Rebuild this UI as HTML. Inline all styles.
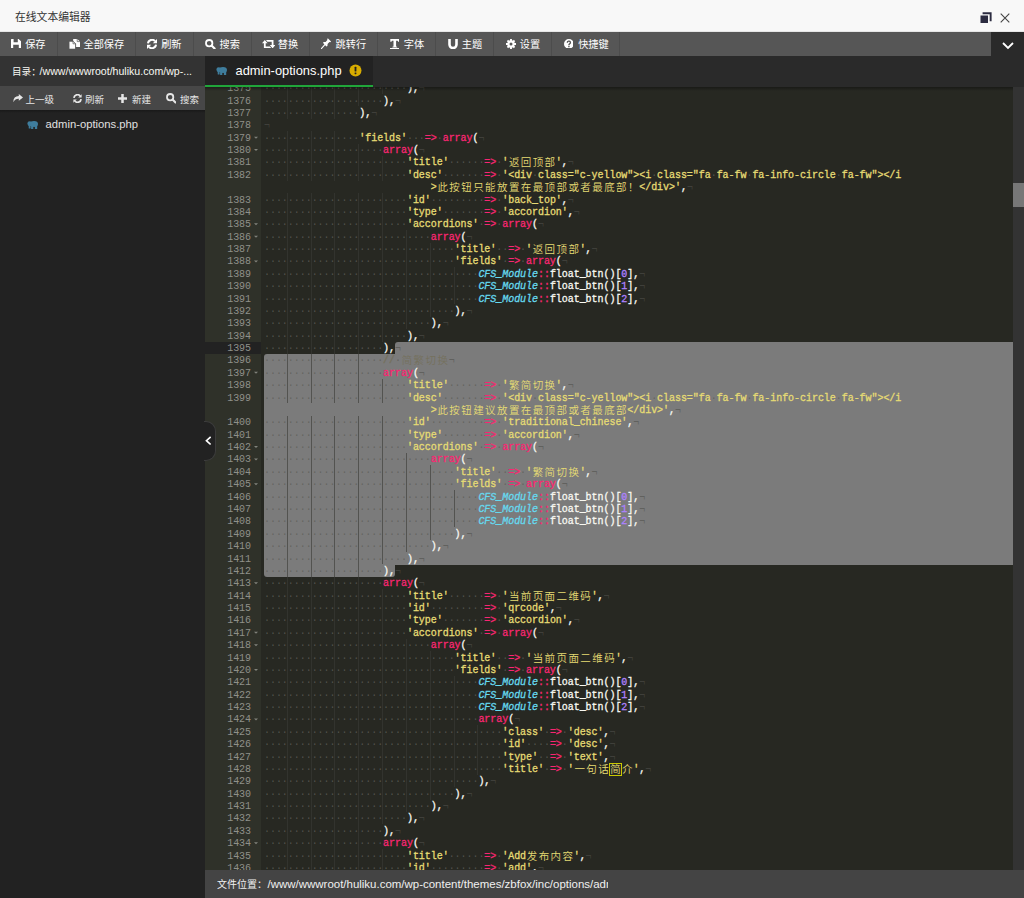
<!DOCTYPE html>
<html lang="zh-CN"><head><meta charset="utf-8"><title>在线文本编辑器</title>
<style>
*{box-sizing:border-box;margin:0;padding:0}
html,body{width:1024px;height:898px;overflow:hidden;background:#272822}
body{position:relative;font-family:"Liberation Sans","Noto Sans CJK SC",sans-serif;font-size:10px;color:#fff}
.abs{position:absolute}
.l{font-size:10.4px}
/* title bar */
#title{left:0;top:0;width:1024px;height:32px;background:#f8f8f8;border-bottom:1px solid #e6e6e6;color:#333}
#title .t{position:absolute;left:15px;top:1px;line-height:32px;font-size:10.8px;color:#333}
/* toolbar */
#tb{left:0;top:32px;width:1024px;height:24px;background:#565656}
#tb .b{position:absolute;top:0;height:24px;border-right:1px solid #4c4c4c;line-height:24px;color:#fff;font-size:10px;white-space:nowrap}
#tb .b span{position:absolute;top:1px;font-size:10.2px}
#tb .b svg{position:absolute}
#tbr{left:991px;top:32px;width:33px;height:24px;background:#2a2a2a}
/* left */
#dir{left:0;top:56px;width:205px;height:30px;background:#333;line-height:30px;white-space:nowrap}
#dir span.t{position:absolute;left:12px;top:-0.5px;font-size:9.6px}
#dir .l{font-size:10.6px;margin-left:-1.2px}
#sub{left:0;top:86px;width:205px;height:24px;background:#474747;line-height:24px;color:#e6e6e6;white-space:nowrap}
#sub span{position:absolute;top:2px;font-size:9.5px}
#sub svg{position:absolute}
#files{left:0;top:110px;width:205px;height:788px;background:#222}
#files .f{position:absolute;left:45.5px;top:6.5px;font-size:11.25px;line-height:14px;color:#e0e0e0;white-space:nowrap}
#handle{left:204px;top:421px;width:12px;height:40px;background:#222;border:1px solid #3c3c3c;border-left:none;border-radius:0 10px 10px 0}
/* tabs */
#tabs{left:205px;top:56px;width:819px;height:31px;background:#2a2a2a}
#tab{left:0;top:0;width:168.3px;height:31px;background:#222;border-bottom:2px solid #20a53a}
#tab .n{position:absolute;left:30.5px;top:0;line-height:29px;font-size:12.9px;color:#fff;white-space:nowrap}
/* editor */
#ed{left:205px;top:87px;width:819px;height:783px;background:#272822;overflow:hidden}
#edin{position:absolute;left:-205px;top:-87px;width:1024px;height:898px}
.gutter{position:absolute;left:205px;top:0;width:56px;height:898px;color:#8F908A}
#gbg{left:205px;top:0;width:56px;height:898px;background:#2F3129}
.gl{position:absolute;left:0;top:0;width:56px;padding-right:10px;text-align:right;height:12.377px;line-height:12.377px;font:10px/12.377px "Liberation Mono",monospace;letter-spacing:-.045px}

.fw{position:absolute;left:49px;top:4px;width:0;height:0;border-left:2.4px solid transparent;border-right:2.4px solid transparent;border-top:2.8px solid #82837c}
.text{position:absolute;left:264px;top:0;width:760px;height:898px}
.ln{position:absolute;left:0;top:0;height:12.377px;white-space:pre;font:10px/12.377px "Liberation Mono","Noto Sans CJK SC",monospace;letter-spacing:-.045px;color:#F8F8F2}
.ln b{position:absolute;top:0;font-weight:normal;-webkit-text-stroke:.3px}
.ln b.j{width:11.9px;text-align:center;font-size:10.5px;letter-spacing:0;font-weight:350;-webkit-text-stroke:0}
.s{color:#E6DB74}.k{color:#F92672}.c{color:#66D9EF;font-style:italic}.n{color:#AE81FF}.com{color:#75715E}.inv{color:rgba(94,94,89,.8);-webkit-text-stroke:0!important}.eol{color:rgba(80,80,75,.6);-webkit-text-stroke:0!important}.t{color:#F8F8F2}
.ig{position:absolute;width:1px;background:rgba(58,58,54,.62)}
.sel{position:absolute;background:#7b7b7b}
#sb{left:1013px;top:87px;width:11px;height:783px;background:#333}
#sbt{left:1013px;top:183px;width:11px;height:24px;background:#777}
#shadow{left:205px;top:87px;width:819px;height:4px;background:linear-gradient(rgba(0,0,0,.35),rgba(0,0,0,0))}
/* footer */
#foot{left:205px;top:870px;width:819px;height:28px;background:#444}
#foot .t{position:absolute;left:12px;top:0;width:391px;height:28px;overflow:hidden;line-height:28px;white-space:nowrap;color:#f0f0f0}
#foot .l{font-size:11.48px;margin-left:.5px}
</style></head><body>
<div id="title" class="abs"><span class="t">在线文本编辑器</span>
<svg class="abs" style="left:980px;top:11.5px" width="12" height="12" viewBox="0 0 12 12"><path d="M2.6 0.3h9v9h-1.9v-7.1h-7.1z" fill="#2b2b40"/><rect x="0.5" y="3.5" width="7.5" height="7.5" fill="#2b2b40"/></svg>
<svg class="abs" style="left:1000px;top:12.5px" width="10" height="10" viewBox="0 0 10 10"><path d="M0.7 0.7L9.3 9.3M9.3 0.7L0.7 9.3" stroke="#444" stroke-width="1.1" fill="none"/></svg>
</div>
<div id="tb" class="abs">
<div class="b" style="left:0.0px;width:57.7px"><svg style="left:10.8px;top:6.7px" width="10" height="9.5" viewBox="0 0 10 9.5"><path d="M0 .6Q0 0 .6 0H7.6L10 2.2V8.9Q10 9.5 9.4 9.5H0.6Q0 9.5 0 8.9Z M2.6 0V3.2H6.8V0Z M2.2 9.5V5.8H7.8V9.5Z" fill="#fff" fill-rule="evenodd"/></svg><span style="left:25.2px">保存</span></div>
<div class="b" style="left:57.2px;width:78.7px"><svg style="left:11.7px;top:6.7px" width="11" height="10.2" viewBox="0 0 11 10.2"><path d="M4.2 0H8.2L11 2.6V8H4.2Z" fill="#fff"/><path d="M0 2.2H4L6.6 4.8V10.2H0Z" fill="#fff" stroke="#565656" stroke-width=".9"/><path d="M4 2.2V4.8H6.6" fill="none" stroke="#565656" stroke-width=".7"/><path d="M8.2 0V2.6H11" fill="none" stroke="#565656" stroke-width=".7"/></svg><span style="left:26.3px">全部保存</span></div>
<div class="b" style="left:135.4px;width:58.5px"><svg style="left:12.0px;top:6.7px" width="10" height="10" viewBox="0 0 10 10"><path d="M1 4.4A4 4 0 0 1 8 2.2" fill="none" stroke="#fff" stroke-width="2"/><path d="M9 5.6A4 4 0 0 1 2 7.8" fill="none" stroke="#fff" stroke-width="2"/><path d="M10 0V4.2H5.8Z" fill="#fff"/><path d="M0 10V5.8H4.2Z" fill="#fff"/></svg><span style="left:25.8px">刷新</span></div>
<div class="b" style="left:193.4px;width:58.6px"><svg style="left:12.0px;top:6.5px" width="10.5" height="10.5" viewBox="0 0 10.5 10.5"><circle cx="4.2" cy="4.2" r="3.2" fill="none" stroke="#fff" stroke-width="1.8"/><path d="M6.6 6.6L9.6 9.6" stroke="#fff" stroke-width="2.1" stroke-linecap="round"/></svg><span style="left:26.2px">搜索</span></div>
<div class="b" style="left:251.5px;width:58.2px"><svg style="left:10.4px;top:7.8px" width="13.4" height="8.4" viewBox="0 0 13.4 8.4"><path d="M0 3.3L2.8 0L5.6 3.3H3.7V6.6H8L9.4 8.4H1.9V3.3Z" fill="#fff"/><path d="M13.4 5.1L10.6 8.4L7.8 5.1H9.7V1.8H5.4L4 0H11.5V5.1Z" fill="#fff"/></svg><span style="left:26.3px">替换</span></div>
<div class="b" style="left:309.2px;width:69.2px"><svg style="left:11.8px;top:6.2px" width="10.5" height="11" viewBox="0 0 10.5 11"><path d="M6.8 0.3L10.2 3.7L9.2 4.3L8.4 4.1L6.6 5.9L6.4 8L5.4 8.4L2.1 5.1L2.5 4.1L4.6 3.9L6.4 2.1L6.2 1.3Z" fill="#fff"/><path d="M3.9 6.6L0.3 10.7" stroke="#fff" stroke-width="1.1" stroke-linecap="round"/></svg><span style="left:26.4px">跳转行</span></div>
<div class="b" style="left:377.9px;width:58.2px"><svg style="left:11.9px;top:6.5px" width="9.6" height="10.6" viewBox="0 0 9.6 10.6"><path d="M0.3 0H9.3V2.8H8.1L7.7 1.7H6.1V7.4L7.2 7.7V8.4H2.4V7.7L3.5 7.4V1.7H1.9L1.5 2.8H0.3Z" fill="#fff"/><rect x="0" y="9" width="9.6" height="1.6" fill="#fff"/></svg><span style="left:25.9px">字体</span></div>
<div class="b" style="left:435.6px;width:58.6px"><svg style="left:12.0px;top:6.6px" width="10" height="10.4" viewBox="0 0 10 10.4"><path d="M1.5 0V5.6A3.5 3.5 0 0 0 8.5 5.6V0" fill="none" stroke="#fff" stroke-width="2.6"/></svg><span style="left:26.2px">主题</span></div>
<div class="b" style="left:493.7px;width:58.4px"><svg style="left:12.0px;top:6.7px" width="10" height="10" viewBox="0 0 10 10"><circle cx="5" cy="5" r="2.6" fill="none" stroke="#fff" stroke-width="2.2"/><g stroke="#fff" stroke-width="1.9"><path d="M5 0V2M5 8V10M0 5H2M8 5H10M1.46 1.46L2.9 2.9M7.1 7.1L8.54 8.54M1.46 8.54L2.9 7.1M7.1 2.9L8.54 1.46"/></g></svg><span style="left:26.1px">设置</span></div>
<div class="b" style="left:551.6px;width:68.9px"><svg style="left:12.0px;top:6.7px" width="9.8" height="9.8" viewBox="0 0 9.4 9.4"><circle cx="4.7" cy="4.7" r="4.7" fill="#fff"/><path d="M3.2 3.6A1.5 1.4 0 1 1 5.4 4.7Q4.7 5.1 4.7 5.9" fill="none" stroke="#565656" stroke-width="1.3"/><rect x="4.05" y="6.6" width="1.3" height="1.3" fill="#565656"/></svg><span style="left:26.6px">快捷键</span></div>
</div>
<div id="tbr" class="abs"><svg class="abs" style="left:11px;top:9.5px" width="12" height="8" viewBox="0 0 12 8"><path d="M1 1L6 6L11 1" stroke="#fff" stroke-width="1.8" fill="none"/></svg></div>
<div id="dir" class="abs"><span class="t">目录：<span class="l">/www/wwwroot/huliku.com/wp-...</span></span></div>
<div id="sub" class="abs">
<svg style="left:13px;top:8px" width="10" height="8.4" viewBox="0 0 10 8.4"><path d="M5.8 0L10 3.4L5.8 6.8V4.7Q2.2 4.5 0.4 8.2Q0 2.6 5.8 2.1Z" fill="#e6e6e6"/></svg><span style="left:25.5px">上一级</span>
<svg style="left:72.5px;top:7.5px" width="9" height="9" viewBox="0 0 10 10"><path d="M1 4.4A4 4 0 0 1 8 2.2" fill="none" stroke="#e6e6e6" stroke-width="2"/><path d="M9 5.6A4 4 0 0 1 2 7.8" fill="none" stroke="#e6e6e6" stroke-width="2"/><path d="M9.6 0.2V4H5.8Z" fill="#e6e6e6"/><path d="M0.4 9.8V6H4.2Z" fill="#e6e6e6"/></svg><span style="left:85.0px">刷新</span>
<svg style="left:118px;top:7.6px" width="9" height="9" viewBox="0 0 9 9"><path d="M4.5 0V9M0 4.5H9" stroke="#e6e6e6" stroke-width="2.5"/></svg><span style="left:132.0px">新建</span>
<svg style="left:166px;top:7.3px" width="10.4" height="10.4" viewBox="0 0 10.5 10.5"><circle cx="4.2" cy="4.2" r="3.2" fill="none" stroke="#e6e6e6" stroke-width="1.8"/><path d="M6.6 6.6L9.6 9.6" stroke="#e6e6e6" stroke-width="2.1" stroke-linecap="round"/></svg><span style="left:180.0px">搜索</span>
</div>
<div id="files" class="abs"><div class="abs" style="left:0;top:0;width:205px;height:3px;background:linear-gradient(rgba(0,0,0,.28),rgba(0,0,0,0))"></div>
<svg class="abs" style="left:27.1px;top:10.599999999999994px" width="11.4" height="8.4" viewBox="0 0 11.4 8.4"><g fill="#3f7d9d"><circle cx="2.9" cy="2.7" r="2.5"/><ellipse cx="7" cy="3.1" rx="4" ry="3"/><rect x="1.7" y="3.5" width="1.9" height="4" rx=".6"/><rect x="4.1" y="4" width="2.2" height="4.4" rx=".5"/><rect x="7.9" y="4" width="2.3" height="4.4" rx=".5"/></g></svg>
<span class="f">admin-options.php</span></div>
<div id="tabs" class="abs"><div id="tab" class="abs">
<svg class="abs" style="left:11px;top:10.700000000000003px" width="11.4" height="8.4" viewBox="0 0 11.4 8.4"><g fill="#3f7d9d"><circle cx="2.9" cy="2.7" r="2.5"/><ellipse cx="7" cy="3.1" rx="4" ry="3"/><rect x="1.7" y="3.5" width="1.9" height="4" rx=".6"/><rect x="4.1" y="4" width="2.2" height="4.4" rx=".5"/><rect x="7.9" y="4" width="2.3" height="4.4" rx=".5"/></g></svg>
<span class="n">admin-options.php</span>
<svg class="abs" style="left:144.3px;top:8.4px" width="13" height="13" viewBox="0 0 13 13"><circle cx="6.5" cy="6.5" r="6" fill="#d8ac00"/><rect x="5.6" y="2.8" width="1.8" height="4.6" rx=".5" fill="#222"/><rect x="5.6" y="8.4" width="1.8" height="1.8" rx=".4" fill="#222"/></svg>
</div></div>
<div id="ed" class="abs"><div id="edin">
<div id="gbg" class="abs"></div>
<div class="sel" style="left:395.03px;top:341.60px;width:617.97px;height:12.68px;border-radius:3px 0 0 0"></div>
<div class="sel" style="left:264.00px;top:353.97px;width:749.00px;height:210.71px;border-radius:3px 0 0 0"></div>
<div class="sel" style="left:264.00px;top:564.38px;width:131.03px;height:12.38px;border-radius:0 0 3px 3px"></div>
<div class="abs" style="left:205px;top:341.60px;width:56px;height:12.38px;background:#222"></div>
<div class="abs" style="left:609.15px;top:763.21px;width:12.51px;height:12.38px;border:1px solid #c8c800;z-index:3"></div>
<div class="gutter"><div class="gl" style="transform:translateY(83.18px)">1375</div><div class="gl" style="transform:translateY(95.56px)">1376</div><div class="gl" style="transform:translateY(107.93px)">1377</div><div class="gl" style="transform:translateY(120.31px)">1378</div><div class="gl" style="transform:translateY(132.69px)">1379<i class="fw"></i></div><div class="gl" style="transform:translateY(145.06px)">1380<i class="fw"></i></div><div class="gl" style="transform:translateY(157.44px)">1381</div><div class="gl" style="transform:translateY(169.82px)">1382</div><div class="gl" style="transform:translateY(194.57px)">1383</div><div class="gl" style="transform:translateY(206.95px)">1384</div><div class="gl" style="transform:translateY(219.33px)">1385<i class="fw"></i></div><div class="gl" style="transform:translateY(231.7px)">1386<i class="fw"></i></div><div class="gl" style="transform:translateY(244.08px)">1387</div><div class="gl" style="transform:translateY(256.46px)">1388<i class="fw"></i></div><div class="gl" style="transform:translateY(268.84px)">1389</div><div class="gl" style="transform:translateY(281.21px)">1390</div><div class="gl" style="transform:translateY(293.59px)">1391</div><div class="gl" style="transform:translateY(305.97px)">1392</div><div class="gl" style="transform:translateY(318.34px)">1393</div><div class="gl" style="transform:translateY(330.72px)">1394</div><div class="gl act" style="transform:translateY(343.1px)">1395</div><div class="gl" style="transform:translateY(355.47px)">1396</div><div class="gl" style="transform:translateY(367.85px)">1397<i class="fw"></i></div><div class="gl" style="transform:translateY(380.23px)">1398</div><div class="gl" style="transform:translateY(392.61px)">1399</div><div class="gl" style="transform:translateY(417.36px)">1400</div><div class="gl" style="transform:translateY(429.74px)">1401</div><div class="gl" style="transform:translateY(442.11px)">1402<i class="fw"></i></div><div class="gl" style="transform:translateY(454.49px)">1403<i class="fw"></i></div><div class="gl" style="transform:translateY(466.87px)">1404</div><div class="gl" style="transform:translateY(479.24px)">1405<i class="fw"></i></div><div class="gl" style="transform:translateY(491.62px)">1406</div><div class="gl" style="transform:translateY(504px)">1407</div><div class="gl" style="transform:translateY(516.38px)">1408</div><div class="gl" style="transform:translateY(528.75px)">1409</div><div class="gl" style="transform:translateY(541.13px)">1410</div><div class="gl" style="transform:translateY(553.51px)">1411</div><div class="gl" style="transform:translateY(565.88px)">1412</div><div class="gl" style="transform:translateY(578.26px)">1413<i class="fw"></i></div><div class="gl" style="transform:translateY(590.64px)">1414</div><div class="gl" style="transform:translateY(603.01px)">1415</div><div class="gl" style="transform:translateY(615.39px)">1416</div><div class="gl" style="transform:translateY(627.77px)">1417<i class="fw"></i></div><div class="gl" style="transform:translateY(640.14px)">1418<i class="fw"></i></div><div class="gl" style="transform:translateY(652.52px)">1419</div><div class="gl" style="transform:translateY(664.9px)">1420<i class="fw"></i></div><div class="gl" style="transform:translateY(677.28px)">1421</div><div class="gl" style="transform:translateY(689.65px)">1422</div><div class="gl" style="transform:translateY(702.03px)">1423</div><div class="gl" style="transform:translateY(714.41px)">1424<i class="fw"></i></div><div class="gl" style="transform:translateY(726.78px)">1425</div><div class="gl" style="transform:translateY(739.16px)">1426</div><div class="gl" style="transform:translateY(751.54px)">1427</div><div class="gl" style="transform:translateY(763.91px)">1428</div><div class="gl" style="transform:translateY(776.29px)">1429</div><div class="gl" style="transform:translateY(788.67px)">1430</div><div class="gl" style="transform:translateY(801.05px)">1431</div><div class="gl" style="transform:translateY(813.42px)">1432</div><div class="gl" style="transform:translateY(825.8px)">1433</div><div class="gl" style="transform:translateY(838.18px)">1434<i class="fw"></i></div><div class="gl" style="transform:translateY(850.55px)">1435</div><div class="gl" style="transform:translateY(862.93px)">1436</div></div>
<div class="text"><i class="ig" style="left:22.82px;top:81.68px;height:37.13px"></i><i class="ig" style="left:22.82px;top:131.19px;height:49.51px"></i><i class="ig" style="left:22.82px;top:193.07px;height:210.41px"></i><i class="ig" style="left:22.82px;top:415.86px;height:457.95px"></i><i class="ig" style="left:46.65px;top:81.68px;height:37.13px"></i><i class="ig" style="left:46.65px;top:131.19px;height:49.51px"></i><i class="ig" style="left:46.65px;top:193.07px;height:210.41px"></i><i class="ig" style="left:46.65px;top:415.86px;height:457.95px"></i><i class="ig" style="left:70.47px;top:81.68px;height:37.13px"></i><i class="ig" style="left:70.47px;top:131.19px;height:49.51px"></i><i class="ig" style="left:70.47px;top:193.07px;height:210.41px"></i><i class="ig" style="left:70.47px;top:415.86px;height:457.95px"></i><i class="ig" style="left:94.3px;top:81.68px;height:24.75px"></i><i class="ig" style="left:94.3px;top:143.56px;height:37.13px"></i><i class="ig" style="left:94.3px;top:193.07px;height:210.41px"></i><i class="ig" style="left:94.3px;top:415.86px;height:457.95px"></i><i class="ig" style="left:118.12px;top:81.68px;height:12.38px"></i><i class="ig" style="left:118.12px;top:155.94px;height:24.75px"></i><i class="ig" style="left:118.12px;top:193.07px;height:148.52px"></i><i class="ig" style="left:118.12px;top:378.73px;height:24.75px"></i><i class="ig" style="left:118.12px;top:415.86px;height:148.52px"></i><i class="ig" style="left:118.12px;top:589.14px;height:235.16px"></i><i class="ig" style="left:118.12px;top:849.05px;height:24.75px"></i><i class="ig" style="left:141.94px;top:230.2px;height:99.02px"></i><i class="ig" style="left:141.94px;top:452.99px;height:99.02px"></i><i class="ig" style="left:141.94px;top:638.64px;height:173.28px"></i><i class="ig" style="left:165.77px;top:242.58px;height:74.26px"></i><i class="ig" style="left:165.77px;top:465.37px;height:74.26px"></i><i class="ig" style="left:165.77px;top:651.02px;height:148.52px"></i><i class="ig" style="left:189.59px;top:267.34px;height:37.13px"></i><i class="ig" style="left:189.59px;top:490.12px;height:37.13px"></i><i class="ig" style="left:189.59px;top:675.78px;height:111.39px"></i><i class="ig" style="left:213.42px;top:725.28px;height:49.51px"></i>
<div class="ln" style="transform:translateY(83.18px)"><b class="inv" style="left:0px">····</b><b class="inv" style="left:23.82px">····</b><b class="inv" style="left:47.65px">····</b><b class="inv" style="left:71.47px">····</b><b class="inv" style="left:95.3px">····</b><b class="inv" style="left:119.12px">····</b><b class="t" style="left:142.94px">),</b><b class="eol" style="left:154.86px">¬</b></div>
<div class="ln" style="transform:translateY(95.56px)"><b class="inv" style="left:0px">····</b><b class="inv" style="left:23.82px">····</b><b class="inv" style="left:47.65px">····</b><b class="inv" style="left:71.47px">····</b><b class="inv" style="left:95.3px">····</b><b class="t" style="left:119.12px">),</b><b class="eol" style="left:131.03px">¬</b></div>
<div class="ln" style="transform:translateY(107.93px)"><b class="inv" style="left:0px">····</b><b class="inv" style="left:23.82px">····</b><b class="inv" style="left:47.65px">····</b><b class="inv" style="left:71.47px">····</b><b class="t" style="left:95.3px">),</b><b class="eol" style="left:107.21px">¬</b></div>
<div class="ln" style="transform:translateY(120.31px)"><b class="eol" style="left:0px">¬</b></div>
<div class="ln" style="transform:translateY(132.69px)"><b class="inv" style="left:0px">····</b><b class="inv" style="left:23.82px">····</b><b class="inv" style="left:47.65px">····</b><b class="inv" style="left:71.47px">····</b><b class="s" style="left:95.3px">'fields'</b><b class="inv" style="left:142.94px">···</b><b class="k" style="left:160.81px">=&gt;</b><b class="inv" style="left:172.72px">·</b><b class="k" style="left:178.68px">array</b><b class="t" style="left:208.46px">(</b><b class="eol" style="left:214.42px">¬</b></div>
<div class="ln" style="transform:translateY(145.06px)"><b class="inv" style="left:0px">····</b><b class="inv" style="left:23.82px">····</b><b class="inv" style="left:47.65px">····</b><b class="inv" style="left:71.47px">····</b><b class="inv" style="left:95.3px">····</b><b class="k" style="left:119.12px">array</b><b class="t" style="left:148.9px">(</b><b class="eol" style="left:154.86px">¬</b></div>
<div class="ln" style="transform:translateY(157.44px)"><b class="inv" style="left:0px">····</b><b class="inv" style="left:23.82px">····</b><b class="inv" style="left:47.65px">····</b><b class="inv" style="left:71.47px">····</b><b class="inv" style="left:95.3px">····</b><b class="inv" style="left:119.12px">····</b><b class="s" style="left:142.94px">'title'</b><b class="inv" style="left:184.64px">·</b><b class="inv" style="left:190.59px">····</b><b class="inv" style="left:214.42px">·</b><b class="k" style="left:220.37px">=&gt;</b><b class="inv" style="left:232.28px">·</b><b class="s" style="left:238.24px">'</b><b class="j s" style="left:244.2px">返</b><b class="j s" style="left:256.11px">回</b><b class="j s" style="left:268.02px">顶</b><b class="j s" style="left:279.93px">部</b><b class="s" style="left:291.84px">'</b><b class="t" style="left:297.8px">,</b><b class="eol" style="left:303.76px">¬</b></div>
<div class="ln" style="transform:translateY(169.82px)"><b class="inv" style="left:0px">····</b><b class="inv" style="left:23.82px">····</b><b class="inv" style="left:47.65px">····</b><b class="inv" style="left:71.47px">····</b><b class="inv" style="left:95.3px">····</b><b class="inv" style="left:119.12px">····</b><b class="s" style="left:142.94px">'desc'</b><b class="inv" style="left:178.68px">··</b><b class="inv" style="left:190.59px">····</b><b class="inv" style="left:214.42px">·</b><b class="k" style="left:220.37px">=&gt;</b><b class="inv" style="left:232.28px">·</b><b class="s" style="left:238.24px">'&lt;div</b><b class="inv" style="left:268.02px">·</b><b class="s" style="left:273.98px">class="c-yello</b><b class="s" style="left:357.36px">w"&gt;&lt;i</b><b class="inv" style="left:387.14px">·</b><b class="s" style="left:393.1px">class="fa</b><b class="inv" style="left:446.7px">·</b><b class="s" style="left:452.66px">fa-fw</b><b class="inv" style="left:482.44px">·</b><b class="s" style="left:488.39px">fa-info-circle</b><b class="inv" style="left:571.78px">·</b><b class="s" style="left:577.73px">fa-fw"&gt;&lt;/i</b></div>
<div class="ln" style="transform:translateY(182.2px)"><b class="s" style="left:166.77px">&gt;</b><b class="j s" style="left:172.72px">此</b><b class="j s" style="left:184.64px">按</b><b class="j s" style="left:196.55px">钮</b><b class="j s" style="left:208.46px">只</b><b class="j s" style="left:220.37px">能</b><b class="j s" style="left:232.28px">放</b><b class="j s" style="left:244.2px">置</b><b class="j s" style="left:256.11px">在</b><b class="j s" style="left:268.02px">最</b><b class="j s" style="left:279.93px">顶</b><b class="j s" style="left:291.84px">部</b><b class="j s" style="left:303.76px">或</b><b class="j s" style="left:315.67px">者</b><b class="j s" style="left:327.58px">最</b><b class="j s" style="left:339.49px">底</b><b class="j s" style="left:351.4px">部</b><b class="j s" style="left:363.32px">！</b><b class="s" style="left:375.23px">&lt;/div&gt;'</b><b class="t" style="left:416.92px">,</b><b class="eol" style="left:422.88px">¬</b></div>
<div class="ln" style="transform:translateY(194.57px)"><b class="inv" style="left:0px">····</b><b class="inv" style="left:23.82px">····</b><b class="inv" style="left:47.65px">····</b><b class="inv" style="left:71.47px">····</b><b class="inv" style="left:95.3px">····</b><b class="inv" style="left:119.12px">····</b><b class="s" style="left:142.94px">'id'</b><b class="inv" style="left:166.77px">····</b><b class="inv" style="left:190.59px">····</b><b class="inv" style="left:214.42px">·</b><b class="k" style="left:220.37px">=&gt;</b><b class="inv" style="left:232.28px">·</b><b class="s" style="left:238.24px">'back_top'</b><b class="t" style="left:297.8px">,</b><b class="eol" style="left:303.76px">¬</b></div>
<div class="ln" style="transform:translateY(206.95px)"><b class="inv" style="left:0px">····</b><b class="inv" style="left:23.82px">····</b><b class="inv" style="left:47.65px">····</b><b class="inv" style="left:71.47px">····</b><b class="inv" style="left:95.3px">····</b><b class="inv" style="left:119.12px">····</b><b class="s" style="left:142.94px">'type'</b><b class="inv" style="left:178.68px">··</b><b class="inv" style="left:190.59px">····</b><b class="inv" style="left:214.42px">·</b><b class="k" style="left:220.37px">=&gt;</b><b class="inv" style="left:232.28px">·</b><b class="s" style="left:238.24px">'accordion'</b><b class="t" style="left:303.76px">,</b><b class="eol" style="left:309.71px">¬</b></div>
<div class="ln" style="transform:translateY(219.33px)"><b class="inv" style="left:0px">····</b><b class="inv" style="left:23.82px">····</b><b class="inv" style="left:47.65px">····</b><b class="inv" style="left:71.47px">····</b><b class="inv" style="left:95.3px">····</b><b class="inv" style="left:119.12px">····</b><b class="s" style="left:142.94px">'accordions'</b><b class="inv" style="left:214.42px">·</b><b class="k" style="left:220.37px">=&gt;</b><b class="inv" style="left:232.28px">·</b><b class="k" style="left:238.24px">array</b><b class="t" style="left:268.02px">(</b><b class="eol" style="left:273.98px">¬</b></div>
<div class="ln" style="transform:translateY(231.7px)"><b class="inv" style="left:0px">····</b><b class="inv" style="left:23.82px">····</b><b class="inv" style="left:47.65px">····</b><b class="inv" style="left:71.47px">····</b><b class="inv" style="left:95.3px">····</b><b class="inv" style="left:119.12px">····</b><b class="inv" style="left:142.94px">····</b><b class="k" style="left:166.77px">array</b><b class="t" style="left:196.55px">(</b><b class="eol" style="left:202.5px">¬</b></div>
<div class="ln" style="transform:translateY(244.08px)"><b class="inv" style="left:0px">····</b><b class="inv" style="left:23.82px">····</b><b class="inv" style="left:47.65px">····</b><b class="inv" style="left:71.47px">····</b><b class="inv" style="left:95.3px">····</b><b class="inv" style="left:119.12px">····</b><b class="inv" style="left:142.94px">····</b><b class="inv" style="left:166.77px">····</b><b class="s" style="left:190.59px">'title'</b><b class="inv" style="left:232.28px">·</b><b class="inv" style="left:238.24px">·</b><b class="k" style="left:244.2px">=&gt;</b><b class="inv" style="left:256.11px">·</b><b class="s" style="left:262.06px">'</b><b class="j s" style="left:268.02px">返</b><b class="j s" style="left:279.93px">回</b><b class="j s" style="left:291.84px">顶</b><b class="j s" style="left:303.76px">部</b><b class="s" style="left:315.67px">'</b><b class="t" style="left:321.62px">,</b><b class="eol" style="left:327.58px">¬</b></div>
<div class="ln" style="transform:translateY(256.46px)"><b class="inv" style="left:0px">····</b><b class="inv" style="left:23.82px">····</b><b class="inv" style="left:47.65px">····</b><b class="inv" style="left:71.47px">····</b><b class="inv" style="left:95.3px">····</b><b class="inv" style="left:119.12px">····</b><b class="inv" style="left:142.94px">····</b><b class="inv" style="left:166.77px">····</b><b class="s" style="left:190.59px">'fields'</b><b class="inv" style="left:238.24px">·</b><b class="k" style="left:244.2px">=&gt;</b><b class="inv" style="left:256.11px">·</b><b class="k" style="left:262.06px">array</b><b class="t" style="left:291.84px">(</b><b class="eol" style="left:297.8px">¬</b></div>
<div class="ln" style="transform:translateY(268.84px)"><b class="inv" style="left:0px">····</b><b class="inv" style="left:23.82px">····</b><b class="inv" style="left:47.65px">····</b><b class="inv" style="left:71.47px">····</b><b class="inv" style="left:95.3px">····</b><b class="inv" style="left:119.12px">····</b><b class="inv" style="left:142.94px">····</b><b class="inv" style="left:166.77px">····</b><b class="inv" style="left:190.59px">····</b><b class="c" style="left:214.42px">CFS_Module</b><b class="k" style="left:273.98px">::</b><b class="t" style="left:285.89px">float_btn()[</b><b class="n" style="left:357.36px">0</b><b class="t" style="left:363.32px">],</b><b class="eol" style="left:375.23px">¬</b></div>
<div class="ln" style="transform:translateY(281.21px)"><b class="inv" style="left:0px">····</b><b class="inv" style="left:23.82px">····</b><b class="inv" style="left:47.65px">····</b><b class="inv" style="left:71.47px">····</b><b class="inv" style="left:95.3px">····</b><b class="inv" style="left:119.12px">····</b><b class="inv" style="left:142.94px">····</b><b class="inv" style="left:166.77px">····</b><b class="inv" style="left:190.59px">····</b><b class="c" style="left:214.42px">CFS_Module</b><b class="k" style="left:273.98px">::</b><b class="t" style="left:285.89px">float_btn()[</b><b class="n" style="left:357.36px">1</b><b class="t" style="left:363.32px">],</b><b class="eol" style="left:375.23px">¬</b></div>
<div class="ln" style="transform:translateY(293.59px)"><b class="inv" style="left:0px">····</b><b class="inv" style="left:23.82px">····</b><b class="inv" style="left:47.65px">····</b><b class="inv" style="left:71.47px">····</b><b class="inv" style="left:95.3px">····</b><b class="inv" style="left:119.12px">····</b><b class="inv" style="left:142.94px">····</b><b class="inv" style="left:166.77px">····</b><b class="inv" style="left:190.59px">····</b><b class="c" style="left:214.42px">CFS_Module</b><b class="k" style="left:273.98px">::</b><b class="t" style="left:285.89px">float_btn()[</b><b class="n" style="left:357.36px">2</b><b class="t" style="left:363.32px">],</b><b class="eol" style="left:375.23px">¬</b></div>
<div class="ln" style="transform:translateY(305.97px)"><b class="inv" style="left:0px">····</b><b class="inv" style="left:23.82px">····</b><b class="inv" style="left:47.65px">····</b><b class="inv" style="left:71.47px">····</b><b class="inv" style="left:95.3px">····</b><b class="inv" style="left:119.12px">····</b><b class="inv" style="left:142.94px">····</b><b class="inv" style="left:166.77px">····</b><b class="t" style="left:190.59px">),</b><b class="eol" style="left:202.5px">¬</b></div>
<div class="ln" style="transform:translateY(318.34px)"><b class="inv" style="left:0px">····</b><b class="inv" style="left:23.82px">····</b><b class="inv" style="left:47.65px">····</b><b class="inv" style="left:71.47px">····</b><b class="inv" style="left:95.3px">····</b><b class="inv" style="left:119.12px">····</b><b class="inv" style="left:142.94px">····</b><b class="t" style="left:166.77px">),</b><b class="eol" style="left:178.68px">¬</b></div>
<div class="ln" style="transform:translateY(330.72px)"><b class="inv" style="left:0px">····</b><b class="inv" style="left:23.82px">····</b><b class="inv" style="left:47.65px">····</b><b class="inv" style="left:71.47px">····</b><b class="inv" style="left:95.3px">····</b><b class="inv" style="left:119.12px">····</b><b class="t" style="left:142.94px">),</b><b class="eol" style="left:154.86px">¬</b></div>
<div class="ln" style="transform:translateY(343.1px)"><b class="inv" style="left:0px">····</b><b class="inv" style="left:23.82px">····</b><b class="inv" style="left:47.65px">····</b><b class="inv" style="left:71.47px">····</b><b class="inv" style="left:95.3px">····</b><b class="t" style="left:119.12px">),</b><b class="eol" style="left:131.03px">¬</b></div>
<div class="ln" style="transform:translateY(355.47px)"><b class="inv" style="left:0px">····</b><b class="inv" style="left:23.82px">····</b><b class="inv" style="left:47.65px">····</b><b class="inv" style="left:71.47px">····</b><b class="inv" style="left:95.3px">····</b><b class="com" style="left:119.12px">//</b><b class="inv" style="left:131.03px">·</b><b class="j com" style="left:136.99px">简</b><b class="j com" style="left:148.9px">繁</b><b class="j com" style="left:160.81px">切</b><b class="j com" style="left:172.72px">换</b><b class="eol" style="left:184.64px">¬</b></div>
<div class="ln" style="transform:translateY(367.85px)"><b class="inv" style="left:0px">····</b><b class="inv" style="left:23.82px">····</b><b class="inv" style="left:47.65px">····</b><b class="inv" style="left:71.47px">····</b><b class="inv" style="left:95.3px">····</b><b class="k" style="left:119.12px">array</b><b class="t" style="left:148.9px">(</b><b class="eol" style="left:154.86px">¬</b></div>
<div class="ln" style="transform:translateY(380.23px)"><b class="inv" style="left:0px">····</b><b class="inv" style="left:23.82px">····</b><b class="inv" style="left:47.65px">····</b><b class="inv" style="left:71.47px">····</b><b class="inv" style="left:95.3px">····</b><b class="inv" style="left:119.12px">····</b><b class="s" style="left:142.94px">'title'</b><b class="inv" style="left:184.64px">·</b><b class="inv" style="left:190.59px">····</b><b class="inv" style="left:214.42px">·</b><b class="k" style="left:220.37px">=&gt;</b><b class="inv" style="left:232.28px">·</b><b class="s" style="left:238.24px">'</b><b class="j s" style="left:244.2px">繁</b><b class="j s" style="left:256.11px">简</b><b class="j s" style="left:268.02px">切</b><b class="j s" style="left:279.93px">换</b><b class="s" style="left:291.84px">'</b><b class="t" style="left:297.8px">,</b><b class="eol" style="left:303.76px">¬</b></div>
<div class="ln" style="transform:translateY(392.61px)"><b class="inv" style="left:0px">····</b><b class="inv" style="left:23.82px">····</b><b class="inv" style="left:47.65px">····</b><b class="inv" style="left:71.47px">····</b><b class="inv" style="left:95.3px">····</b><b class="inv" style="left:119.12px">····</b><b class="s" style="left:142.94px">'desc'</b><b class="inv" style="left:178.68px">··</b><b class="inv" style="left:190.59px">····</b><b class="inv" style="left:214.42px">·</b><b class="k" style="left:220.37px">=&gt;</b><b class="inv" style="left:232.28px">·</b><b class="s" style="left:238.24px">'&lt;div</b><b class="inv" style="left:268.02px">·</b><b class="s" style="left:273.98px">class="c-yello</b><b class="s" style="left:357.36px">w"&gt;&lt;i</b><b class="inv" style="left:387.14px">·</b><b class="s" style="left:393.1px">class="fa</b><b class="inv" style="left:446.7px">·</b><b class="s" style="left:452.66px">fa-fw</b><b class="inv" style="left:482.44px">·</b><b class="s" style="left:488.39px">fa-info-circle</b><b class="inv" style="left:571.78px">·</b><b class="s" style="left:577.73px">fa-fw"&gt;&lt;/i</b></div>
<div class="ln" style="transform:translateY(404.98px)"><b class="s" style="left:166.77px">&gt;</b><b class="j s" style="left:172.72px">此</b><b class="j s" style="left:184.64px">按</b><b class="j s" style="left:196.55px">钮</b><b class="j s" style="left:208.46px">建</b><b class="j s" style="left:220.37px">议</b><b class="j s" style="left:232.28px">放</b><b class="j s" style="left:244.2px">置</b><b class="j s" style="left:256.11px">在</b><b class="j s" style="left:268.02px">最</b><b class="j s" style="left:279.93px">顶</b><b class="j s" style="left:291.84px">部</b><b class="j s" style="left:303.76px">或</b><b class="j s" style="left:315.67px">者</b><b class="j s" style="left:327.58px">最</b><b class="j s" style="left:339.49px">底</b><b class="j s" style="left:351.4px">部</b><b class="s" style="left:363.32px">&lt;/div&gt;'</b><b class="t" style="left:405.01px">,</b><b class="eol" style="left:410.96px">¬</b></div>
<div class="ln" style="transform:translateY(417.36px)"><b class="inv" style="left:0px">····</b><b class="inv" style="left:23.82px">····</b><b class="inv" style="left:47.65px">····</b><b class="inv" style="left:71.47px">····</b><b class="inv" style="left:95.3px">····</b><b class="inv" style="left:119.12px">····</b><b class="s" style="left:142.94px">'id'</b><b class="inv" style="left:166.77px">····</b><b class="inv" style="left:190.59px">····</b><b class="inv" style="left:214.42px">·</b><b class="k" style="left:220.37px">=&gt;</b><b class="inv" style="left:232.28px">·</b><b class="s" style="left:238.24px">'traditional_c</b><b class="s" style="left:321.62px">hinese'</b><b class="t" style="left:363.32px">,</b><b class="eol" style="left:369.27px">¬</b></div>
<div class="ln" style="transform:translateY(429.74px)"><b class="inv" style="left:0px">····</b><b class="inv" style="left:23.82px">····</b><b class="inv" style="left:47.65px">····</b><b class="inv" style="left:71.47px">····</b><b class="inv" style="left:95.3px">····</b><b class="inv" style="left:119.12px">····</b><b class="s" style="left:142.94px">'type'</b><b class="inv" style="left:178.68px">··</b><b class="inv" style="left:190.59px">····</b><b class="inv" style="left:214.42px">·</b><b class="k" style="left:220.37px">=&gt;</b><b class="inv" style="left:232.28px">·</b><b class="s" style="left:238.24px">'accordion'</b><b class="t" style="left:303.76px">,</b><b class="eol" style="left:309.71px">¬</b></div>
<div class="ln" style="transform:translateY(442.11px)"><b class="inv" style="left:0px">····</b><b class="inv" style="left:23.82px">····</b><b class="inv" style="left:47.65px">····</b><b class="inv" style="left:71.47px">····</b><b class="inv" style="left:95.3px">····</b><b class="inv" style="left:119.12px">····</b><b class="s" style="left:142.94px">'accordions'</b><b class="inv" style="left:214.42px">·</b><b class="k" style="left:220.37px">=&gt;</b><b class="inv" style="left:232.28px">·</b><b class="k" style="left:238.24px">array</b><b class="t" style="left:268.02px">(</b><b class="eol" style="left:273.98px">¬</b></div>
<div class="ln" style="transform:translateY(454.49px)"><b class="inv" style="left:0px">····</b><b class="inv" style="left:23.82px">····</b><b class="inv" style="left:47.65px">····</b><b class="inv" style="left:71.47px">····</b><b class="inv" style="left:95.3px">····</b><b class="inv" style="left:119.12px">····</b><b class="inv" style="left:142.94px">····</b><b class="k" style="left:166.77px">array</b><b class="t" style="left:196.55px">(</b><b class="eol" style="left:202.5px">¬</b></div>
<div class="ln" style="transform:translateY(466.87px)"><b class="inv" style="left:0px">····</b><b class="inv" style="left:23.82px">····</b><b class="inv" style="left:47.65px">····</b><b class="inv" style="left:71.47px">····</b><b class="inv" style="left:95.3px">····</b><b class="inv" style="left:119.12px">····</b><b class="inv" style="left:142.94px">····</b><b class="inv" style="left:166.77px">····</b><b class="s" style="left:190.59px">'title'</b><b class="inv" style="left:232.28px">·</b><b class="inv" style="left:238.24px">·</b><b class="k" style="left:244.2px">=&gt;</b><b class="inv" style="left:256.11px">·</b><b class="s" style="left:262.06px">'</b><b class="j s" style="left:268.02px">繁</b><b class="j s" style="left:279.93px">简</b><b class="j s" style="left:291.84px">切</b><b class="j s" style="left:303.76px">换</b><b class="s" style="left:315.67px">'</b><b class="t" style="left:321.62px">,</b><b class="eol" style="left:327.58px">¬</b></div>
<div class="ln" style="transform:translateY(479.24px)"><b class="inv" style="left:0px">····</b><b class="inv" style="left:23.82px">····</b><b class="inv" style="left:47.65px">····</b><b class="inv" style="left:71.47px">····</b><b class="inv" style="left:95.3px">····</b><b class="inv" style="left:119.12px">····</b><b class="inv" style="left:142.94px">····</b><b class="inv" style="left:166.77px">····</b><b class="s" style="left:190.59px">'fields'</b><b class="inv" style="left:238.24px">·</b><b class="k" style="left:244.2px">=&gt;</b><b class="inv" style="left:256.11px">·</b><b class="k" style="left:262.06px">array</b><b class="t" style="left:291.84px">(</b><b class="eol" style="left:297.8px">¬</b></div>
<div class="ln" style="transform:translateY(491.62px)"><b class="inv" style="left:0px">····</b><b class="inv" style="left:23.82px">····</b><b class="inv" style="left:47.65px">····</b><b class="inv" style="left:71.47px">····</b><b class="inv" style="left:95.3px">····</b><b class="inv" style="left:119.12px">····</b><b class="inv" style="left:142.94px">····</b><b class="inv" style="left:166.77px">····</b><b class="inv" style="left:190.59px">····</b><b class="c" style="left:214.42px">CFS_Module</b><b class="k" style="left:273.98px">::</b><b class="t" style="left:285.89px">float_btn()[</b><b class="n" style="left:357.36px">0</b><b class="t" style="left:363.32px">],</b><b class="eol" style="left:375.23px">¬</b></div>
<div class="ln" style="transform:translateY(504px)"><b class="inv" style="left:0px">····</b><b class="inv" style="left:23.82px">····</b><b class="inv" style="left:47.65px">····</b><b class="inv" style="left:71.47px">····</b><b class="inv" style="left:95.3px">····</b><b class="inv" style="left:119.12px">····</b><b class="inv" style="left:142.94px">····</b><b class="inv" style="left:166.77px">····</b><b class="inv" style="left:190.59px">····</b><b class="c" style="left:214.42px">CFS_Module</b><b class="k" style="left:273.98px">::</b><b class="t" style="left:285.89px">float_btn()[</b><b class="n" style="left:357.36px">1</b><b class="t" style="left:363.32px">],</b><b class="eol" style="left:375.23px">¬</b></div>
<div class="ln" style="transform:translateY(516.38px)"><b class="inv" style="left:0px">····</b><b class="inv" style="left:23.82px">····</b><b class="inv" style="left:47.65px">····</b><b class="inv" style="left:71.47px">····</b><b class="inv" style="left:95.3px">····</b><b class="inv" style="left:119.12px">····</b><b class="inv" style="left:142.94px">····</b><b class="inv" style="left:166.77px">····</b><b class="inv" style="left:190.59px">····</b><b class="c" style="left:214.42px">CFS_Module</b><b class="k" style="left:273.98px">::</b><b class="t" style="left:285.89px">float_btn()[</b><b class="n" style="left:357.36px">2</b><b class="t" style="left:363.32px">],</b><b class="eol" style="left:375.23px">¬</b></div>
<div class="ln" style="transform:translateY(528.75px)"><b class="inv" style="left:0px">····</b><b class="inv" style="left:23.82px">····</b><b class="inv" style="left:47.65px">····</b><b class="inv" style="left:71.47px">····</b><b class="inv" style="left:95.3px">····</b><b class="inv" style="left:119.12px">····</b><b class="inv" style="left:142.94px">····</b><b class="inv" style="left:166.77px">····</b><b class="t" style="left:190.59px">),</b><b class="eol" style="left:202.5px">¬</b></div>
<div class="ln" style="transform:translateY(541.13px)"><b class="inv" style="left:0px">····</b><b class="inv" style="left:23.82px">····</b><b class="inv" style="left:47.65px">····</b><b class="inv" style="left:71.47px">····</b><b class="inv" style="left:95.3px">····</b><b class="inv" style="left:119.12px">····</b><b class="inv" style="left:142.94px">····</b><b class="t" style="left:166.77px">),</b><b class="eol" style="left:178.68px">¬</b></div>
<div class="ln" style="transform:translateY(553.51px)"><b class="inv" style="left:0px">····</b><b class="inv" style="left:23.82px">····</b><b class="inv" style="left:47.65px">····</b><b class="inv" style="left:71.47px">····</b><b class="inv" style="left:95.3px">····</b><b class="inv" style="left:119.12px">····</b><b class="t" style="left:142.94px">),</b><b class="eol" style="left:154.86px">¬</b></div>
<div class="ln" style="transform:translateY(565.88px)"><b class="inv" style="left:0px">····</b><b class="inv" style="left:23.82px">····</b><b class="inv" style="left:47.65px">····</b><b class="inv" style="left:71.47px">····</b><b class="inv" style="left:95.3px">····</b><b class="t" style="left:119.12px">),</b><b class="eol" style="left:131.03px">¬</b></div>
<div class="ln" style="transform:translateY(578.26px)"><b class="inv" style="left:0px">····</b><b class="inv" style="left:23.82px">····</b><b class="inv" style="left:47.65px">····</b><b class="inv" style="left:71.47px">····</b><b class="inv" style="left:95.3px">····</b><b class="k" style="left:119.12px">array</b><b class="t" style="left:148.9px">(</b><b class="eol" style="left:154.86px">¬</b></div>
<div class="ln" style="transform:translateY(590.64px)"><b class="inv" style="left:0px">····</b><b class="inv" style="left:23.82px">····</b><b class="inv" style="left:47.65px">····</b><b class="inv" style="left:71.47px">····</b><b class="inv" style="left:95.3px">····</b><b class="inv" style="left:119.12px">····</b><b class="s" style="left:142.94px">'title'</b><b class="inv" style="left:184.64px">·</b><b class="inv" style="left:190.59px">····</b><b class="inv" style="left:214.42px">·</b><b class="k" style="left:220.37px">=&gt;</b><b class="inv" style="left:232.28px">·</b><b class="s" style="left:238.24px">'</b><b class="j s" style="left:244.2px">当</b><b class="j s" style="left:256.11px">前</b><b class="j s" style="left:268.02px">页</b><b class="j s" style="left:279.93px">面</b><b class="j s" style="left:291.84px">二</b><b class="j s" style="left:303.76px">维</b><b class="j s" style="left:315.67px">码</b><b class="s" style="left:327.58px">'</b><b class="t" style="left:333.54px">,</b><b class="eol" style="left:339.49px">¬</b></div>
<div class="ln" style="transform:translateY(603.01px)"><b class="inv" style="left:0px">····</b><b class="inv" style="left:23.82px">····</b><b class="inv" style="left:47.65px">····</b><b class="inv" style="left:71.47px">····</b><b class="inv" style="left:95.3px">····</b><b class="inv" style="left:119.12px">····</b><b class="s" style="left:142.94px">'id'</b><b class="inv" style="left:166.77px">····</b><b class="inv" style="left:190.59px">····</b><b class="inv" style="left:214.42px">·</b><b class="k" style="left:220.37px">=&gt;</b><b class="inv" style="left:232.28px">·</b><b class="s" style="left:238.24px">'qrcode'</b><b class="t" style="left:285.89px">,</b><b class="eol" style="left:291.84px">¬</b></div>
<div class="ln" style="transform:translateY(615.39px)"><b class="inv" style="left:0px">····</b><b class="inv" style="left:23.82px">····</b><b class="inv" style="left:47.65px">····</b><b class="inv" style="left:71.47px">····</b><b class="inv" style="left:95.3px">····</b><b class="inv" style="left:119.12px">····</b><b class="s" style="left:142.94px">'type'</b><b class="inv" style="left:178.68px">··</b><b class="inv" style="left:190.59px">····</b><b class="inv" style="left:214.42px">·</b><b class="k" style="left:220.37px">=&gt;</b><b class="inv" style="left:232.28px">·</b><b class="s" style="left:238.24px">'accordion'</b><b class="t" style="left:303.76px">,</b><b class="eol" style="left:309.71px">¬</b></div>
<div class="ln" style="transform:translateY(627.77px)"><b class="inv" style="left:0px">····</b><b class="inv" style="left:23.82px">····</b><b class="inv" style="left:47.65px">····</b><b class="inv" style="left:71.47px">····</b><b class="inv" style="left:95.3px">····</b><b class="inv" style="left:119.12px">····</b><b class="s" style="left:142.94px">'accordions'</b><b class="inv" style="left:214.42px">·</b><b class="k" style="left:220.37px">=&gt;</b><b class="inv" style="left:232.28px">·</b><b class="k" style="left:238.24px">array</b><b class="t" style="left:268.02px">(</b><b class="eol" style="left:273.98px">¬</b></div>
<div class="ln" style="transform:translateY(640.14px)"><b class="inv" style="left:0px">····</b><b class="inv" style="left:23.82px">····</b><b class="inv" style="left:47.65px">····</b><b class="inv" style="left:71.47px">····</b><b class="inv" style="left:95.3px">····</b><b class="inv" style="left:119.12px">····</b><b class="inv" style="left:142.94px">····</b><b class="k" style="left:166.77px">array</b><b class="t" style="left:196.55px">(</b><b class="eol" style="left:202.5px">¬</b></div>
<div class="ln" style="transform:translateY(652.52px)"><b class="inv" style="left:0px">····</b><b class="inv" style="left:23.82px">····</b><b class="inv" style="left:47.65px">····</b><b class="inv" style="left:71.47px">····</b><b class="inv" style="left:95.3px">····</b><b class="inv" style="left:119.12px">····</b><b class="inv" style="left:142.94px">····</b><b class="inv" style="left:166.77px">····</b><b class="s" style="left:190.59px">'title'</b><b class="inv" style="left:232.28px">·</b><b class="inv" style="left:238.24px">·</b><b class="k" style="left:244.2px">=&gt;</b><b class="inv" style="left:256.11px">·</b><b class="s" style="left:262.06px">'</b><b class="j s" style="left:268.02px">当</b><b class="j s" style="left:279.93px">前</b><b class="j s" style="left:291.84px">页</b><b class="j s" style="left:303.76px">面</b><b class="j s" style="left:315.67px">二</b><b class="j s" style="left:327.58px">维</b><b class="j s" style="left:339.49px">码</b><b class="s" style="left:351.4px">'</b><b class="t" style="left:357.36px">,</b><b class="eol" style="left:363.32px">¬</b></div>
<div class="ln" style="transform:translateY(664.9px)"><b class="inv" style="left:0px">····</b><b class="inv" style="left:23.82px">····</b><b class="inv" style="left:47.65px">····</b><b class="inv" style="left:71.47px">····</b><b class="inv" style="left:95.3px">····</b><b class="inv" style="left:119.12px">····</b><b class="inv" style="left:142.94px">····</b><b class="inv" style="left:166.77px">····</b><b class="s" style="left:190.59px">'fields'</b><b class="inv" style="left:238.24px">·</b><b class="k" style="left:244.2px">=&gt;</b><b class="inv" style="left:256.11px">·</b><b class="k" style="left:262.06px">array</b><b class="t" style="left:291.84px">(</b><b class="eol" style="left:297.8px">¬</b></div>
<div class="ln" style="transform:translateY(677.28px)"><b class="inv" style="left:0px">····</b><b class="inv" style="left:23.82px">····</b><b class="inv" style="left:47.65px">····</b><b class="inv" style="left:71.47px">····</b><b class="inv" style="left:95.3px">····</b><b class="inv" style="left:119.12px">····</b><b class="inv" style="left:142.94px">····</b><b class="inv" style="left:166.77px">····</b><b class="inv" style="left:190.59px">····</b><b class="c" style="left:214.42px">CFS_Module</b><b class="k" style="left:273.98px">::</b><b class="t" style="left:285.89px">float_btn()[</b><b class="n" style="left:357.36px">0</b><b class="t" style="left:363.32px">],</b><b class="eol" style="left:375.23px">¬</b></div>
<div class="ln" style="transform:translateY(689.65px)"><b class="inv" style="left:0px">····</b><b class="inv" style="left:23.82px">····</b><b class="inv" style="left:47.65px">····</b><b class="inv" style="left:71.47px">····</b><b class="inv" style="left:95.3px">····</b><b class="inv" style="left:119.12px">····</b><b class="inv" style="left:142.94px">····</b><b class="inv" style="left:166.77px">····</b><b class="inv" style="left:190.59px">····</b><b class="c" style="left:214.42px">CFS_Module</b><b class="k" style="left:273.98px">::</b><b class="t" style="left:285.89px">float_btn()[</b><b class="n" style="left:357.36px">1</b><b class="t" style="left:363.32px">],</b><b class="eol" style="left:375.23px">¬</b></div>
<div class="ln" style="transform:translateY(702.03px)"><b class="inv" style="left:0px">····</b><b class="inv" style="left:23.82px">····</b><b class="inv" style="left:47.65px">····</b><b class="inv" style="left:71.47px">····</b><b class="inv" style="left:95.3px">····</b><b class="inv" style="left:119.12px">····</b><b class="inv" style="left:142.94px">····</b><b class="inv" style="left:166.77px">····</b><b class="inv" style="left:190.59px">····</b><b class="c" style="left:214.42px">CFS_Module</b><b class="k" style="left:273.98px">::</b><b class="t" style="left:285.89px">float_btn()[</b><b class="n" style="left:357.36px">2</b><b class="t" style="left:363.32px">],</b><b class="eol" style="left:375.23px">¬</b></div>
<div class="ln" style="transform:translateY(714.41px)"><b class="inv" style="left:0px">····</b><b class="inv" style="left:23.82px">····</b><b class="inv" style="left:47.65px">····</b><b class="inv" style="left:71.47px">····</b><b class="inv" style="left:95.3px">····</b><b class="inv" style="left:119.12px">····</b><b class="inv" style="left:142.94px">····</b><b class="inv" style="left:166.77px">····</b><b class="inv" style="left:190.59px">····</b><b class="k" style="left:214.42px">array</b><b class="t" style="left:244.2px">(</b><b class="eol" style="left:250.15px">¬</b></div>
<div class="ln" style="transform:translateY(726.78px)"><b class="inv" style="left:0px">····</b><b class="inv" style="left:23.82px">····</b><b class="inv" style="left:47.65px">····</b><b class="inv" style="left:71.47px">····</b><b class="inv" style="left:95.3px">····</b><b class="inv" style="left:119.12px">····</b><b class="inv" style="left:142.94px">····</b><b class="inv" style="left:166.77px">····</b><b class="inv" style="left:190.59px">····</b><b class="inv" style="left:214.42px">····</b><b class="s" style="left:238.24px">'class'</b><b class="inv" style="left:279.93px">·</b><b class="k" style="left:285.89px">=&gt;</b><b class="inv" style="left:297.8px">·</b><b class="s" style="left:303.76px">'desc'</b><b class="t" style="left:339.49px">,</b><b class="eol" style="left:345.45px">¬</b></div>
<div class="ln" style="transform:translateY(739.16px)"><b class="inv" style="left:0px">····</b><b class="inv" style="left:23.82px">····</b><b class="inv" style="left:47.65px">····</b><b class="inv" style="left:71.47px">····</b><b class="inv" style="left:95.3px">····</b><b class="inv" style="left:119.12px">····</b><b class="inv" style="left:142.94px">····</b><b class="inv" style="left:166.77px">····</b><b class="inv" style="left:190.59px">····</b><b class="inv" style="left:214.42px">····</b><b class="s" style="left:238.24px">'id'</b><b class="inv" style="left:262.06px">····</b><b class="k" style="left:285.89px">=&gt;</b><b class="inv" style="left:297.8px">·</b><b class="s" style="left:303.76px">'desc'</b><b class="t" style="left:339.49px">,</b><b class="eol" style="left:345.45px">¬</b></div>
<div class="ln" style="transform:translateY(751.54px)"><b class="inv" style="left:0px">····</b><b class="inv" style="left:23.82px">····</b><b class="inv" style="left:47.65px">····</b><b class="inv" style="left:71.47px">····</b><b class="inv" style="left:95.3px">····</b><b class="inv" style="left:119.12px">····</b><b class="inv" style="left:142.94px">····</b><b class="inv" style="left:166.77px">····</b><b class="inv" style="left:190.59px">····</b><b class="inv" style="left:214.42px">····</b><b class="s" style="left:238.24px">'type'</b><b class="inv" style="left:273.98px">··</b><b class="k" style="left:285.89px">=&gt;</b><b class="inv" style="left:297.8px">·</b><b class="s" style="left:303.76px">'text'</b><b class="t" style="left:339.49px">,</b><b class="eol" style="left:345.45px">¬</b></div>
<div class="ln" style="transform:translateY(763.91px)"><b class="inv" style="left:0px">····</b><b class="inv" style="left:23.82px">····</b><b class="inv" style="left:47.65px">····</b><b class="inv" style="left:71.47px">····</b><b class="inv" style="left:95.3px">····</b><b class="inv" style="left:119.12px">····</b><b class="inv" style="left:142.94px">····</b><b class="inv" style="left:166.77px">····</b><b class="inv" style="left:190.59px">····</b><b class="inv" style="left:214.42px">····</b><b class="s" style="left:238.24px">'title'</b><b class="inv" style="left:279.93px">·</b><b class="k" style="left:285.89px">=&gt;</b><b class="inv" style="left:297.8px">·</b><b class="s" style="left:303.76px">'</b><b class="j s" style="left:309.71px">一</b><b class="j s" style="left:321.62px">句</b><b class="j s" style="left:333.54px">话</b><b class="j s" style="left:345.45px">简</b><b class="j s" style="left:357.36px">介</b><b class="s" style="left:369.27px">'</b><b class="t" style="left:375.23px">,</b><b class="eol" style="left:381.18px">¬</b></div>
<div class="ln" style="transform:translateY(776.29px)"><b class="inv" style="left:0px">····</b><b class="inv" style="left:23.82px">····</b><b class="inv" style="left:47.65px">····</b><b class="inv" style="left:71.47px">····</b><b class="inv" style="left:95.3px">····</b><b class="inv" style="left:119.12px">····</b><b class="inv" style="left:142.94px">····</b><b class="inv" style="left:166.77px">····</b><b class="inv" style="left:190.59px">····</b><b class="t" style="left:214.42px">),</b><b class="eol" style="left:226.33px">¬</b></div>
<div class="ln" style="transform:translateY(788.67px)"><b class="inv" style="left:0px">····</b><b class="inv" style="left:23.82px">····</b><b class="inv" style="left:47.65px">····</b><b class="inv" style="left:71.47px">····</b><b class="inv" style="left:95.3px">····</b><b class="inv" style="left:119.12px">····</b><b class="inv" style="left:142.94px">····</b><b class="inv" style="left:166.77px">····</b><b class="t" style="left:190.59px">),</b><b class="eol" style="left:202.5px">¬</b></div>
<div class="ln" style="transform:translateY(801.05px)"><b class="inv" style="left:0px">····</b><b class="inv" style="left:23.82px">····</b><b class="inv" style="left:47.65px">····</b><b class="inv" style="left:71.47px">····</b><b class="inv" style="left:95.3px">····</b><b class="inv" style="left:119.12px">····</b><b class="inv" style="left:142.94px">····</b><b class="t" style="left:166.77px">),</b><b class="eol" style="left:178.68px">¬</b></div>
<div class="ln" style="transform:translateY(813.42px)"><b class="inv" style="left:0px">····</b><b class="inv" style="left:23.82px">····</b><b class="inv" style="left:47.65px">····</b><b class="inv" style="left:71.47px">····</b><b class="inv" style="left:95.3px">····</b><b class="inv" style="left:119.12px">····</b><b class="t" style="left:142.94px">),</b><b class="eol" style="left:154.86px">¬</b></div>
<div class="ln" style="transform:translateY(825.8px)"><b class="inv" style="left:0px">····</b><b class="inv" style="left:23.82px">····</b><b class="inv" style="left:47.65px">····</b><b class="inv" style="left:71.47px">····</b><b class="inv" style="left:95.3px">····</b><b class="t" style="left:119.12px">),</b><b class="eol" style="left:131.03px">¬</b></div>
<div class="ln" style="transform:translateY(838.18px)"><b class="inv" style="left:0px">····</b><b class="inv" style="left:23.82px">····</b><b class="inv" style="left:47.65px">····</b><b class="inv" style="left:71.47px">····</b><b class="inv" style="left:95.3px">····</b><b class="k" style="left:119.12px">array</b><b class="t" style="left:148.9px">(</b><b class="eol" style="left:154.86px">¬</b></div>
<div class="ln" style="transform:translateY(850.55px)"><b class="inv" style="left:0px">····</b><b class="inv" style="left:23.82px">····</b><b class="inv" style="left:47.65px">····</b><b class="inv" style="left:71.47px">····</b><b class="inv" style="left:95.3px">····</b><b class="inv" style="left:119.12px">····</b><b class="s" style="left:142.94px">'title'</b><b class="inv" style="left:184.64px">·</b><b class="inv" style="left:190.59px">····</b><b class="inv" style="left:214.42px">·</b><b class="k" style="left:220.37px">=&gt;</b><b class="inv" style="left:232.28px">·</b><b class="s" style="left:238.24px">'Add</b><b class="j s" style="left:262.06px">发</b><b class="j s" style="left:273.98px">布</b><b class="j s" style="left:285.89px">内</b><b class="j s" style="left:297.8px">容</b><b class="s" style="left:309.71px">'</b><b class="t" style="left:315.67px">,</b><b class="eol" style="left:321.62px">¬</b></div>
<div class="ln" style="transform:translateY(862.93px)"><b class="inv" style="left:0px">····</b><b class="inv" style="left:23.82px">····</b><b class="inv" style="left:47.65px">····</b><b class="inv" style="left:71.47px">····</b><b class="inv" style="left:95.3px">····</b><b class="inv" style="left:119.12px">····</b><b class="s" style="left:142.94px">'id'</b><b class="inv" style="left:166.77px">····</b><b class="inv" style="left:190.59px">····</b><b class="inv" style="left:214.42px">·</b><b class="k" style="left:220.37px">=&gt;</b><b class="inv" style="left:232.28px">·</b><b class="s" style="left:238.24px">'add'</b><b class="t" style="left:268.02px">,</b><b class="eol" style="left:273.98px">¬</b></div></div>
</div></div>
<div id="shadow" class="abs"></div>
<div id="sb" class="abs"></div><div id="sbt" class="abs"></div>
<div id="foot" class="abs"><span class="t">文件位置：<span class="l">/www/wwwroot/huliku.com/wp-content/themes/zbfox/inc/options/admin-options.php</span></span></div>
<div id="handle" class="abs"><svg class="abs" style="left:.8px;top:13.6px" width="6.6" height="9.4" viewBox="0 0 7 10"><path d="M6 1L1.5 5L6 9" stroke="#fff" stroke-width="1.7" fill="none"/></svg></div>
</body></html>
